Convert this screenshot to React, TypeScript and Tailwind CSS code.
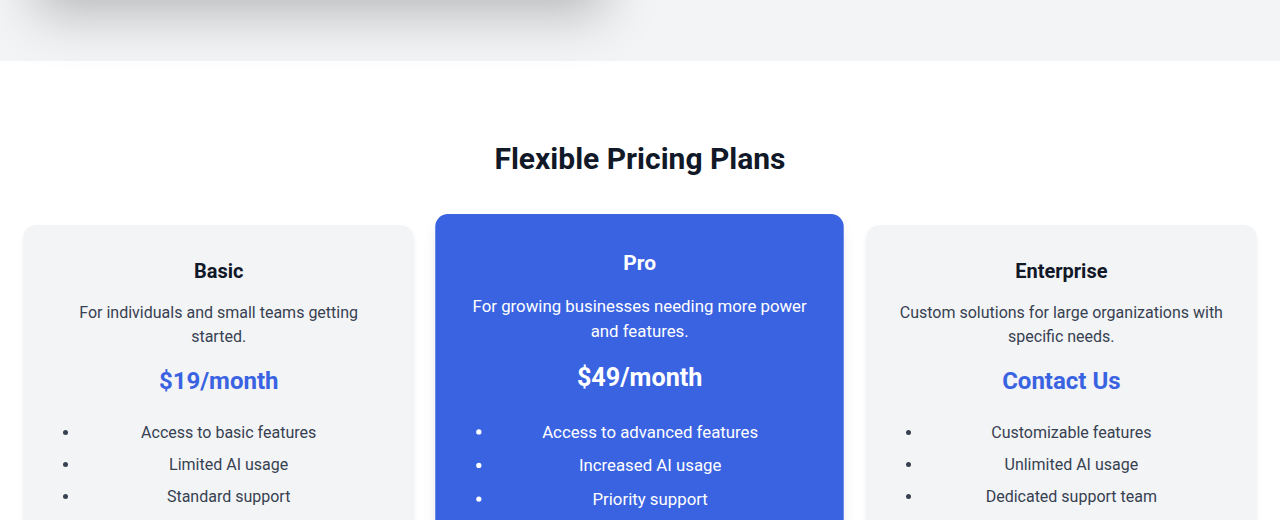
const plans = [
  {
    name: 'Basic',
    desc: 'For individuals and small teams getting started.',
    price: '$19/month',
    features: ['Access to basic features', 'Limited AI usage', 'Standard support'],
    featured: false,
  },
  {
    name: 'Pro',
    desc: 'For growing businesses needing more power and features.',
    price: '$49/month',
    features: ['Access to advanced features', 'Increased AI usage', 'Priority support'],
    featured: true,
  },
  {
    name: 'Enterprise',
    desc: 'Custom solutions for large organizations with specific needs.',
    price: 'Contact Us',
    features: ['Customizable features', 'Unlimited AI usage', 'Dedicated support team'],
    featured: false,
  },
]

const App = () => {
  return (
    <div className="min-h-screen bg-white font-['Roboto',sans-serif] overflow-hidden">
      <section className="bg-[#f3f4f6] px-6 pb-[61px]">
        <div className="grid grid-cols-2 gap-12">
          <div className="h-[300px] -mt-[300px] rounded-xl bg-white shadow-2xl" />
          <div />
        </div>
      </section>

      <section className="px-6 py-20">
        <h2 className="text-center text-3xl font-bold text-[#111827] mb-12">
          Flexible Pricing Plans
        </h2>
        <div className="grid grid-cols-3 gap-8">
          {plans.map((plan) =>
            plan.featured ? (
              <div
                key={plan.name}
                className="h-[440px] scale-105 rounded-xl bg-[#3a63e2] p-8 text-center text-white shadow-lg"
              >
                <h3 className="text-xl font-bold mb-4">{plan.name}</h3>
                <p className="text-base leading-6 mb-4">{plan.desc}</p>
                <div className="text-2xl font-bold mb-6">{plan.price}</div>
                <ul className="list-disc pl-6 pr-1 space-y-2">
                  {plan.features.map((f) => (
                    <li key={f}>{f}</li>
                  ))}
                </ul>
              </div>
            ) : (
              <div
                key={plan.name}
                className="h-[440px] rounded-xl bg-[#f3f4f6] p-8 text-center shadow-md"
              >
                <h3 className="text-xl font-bold text-[#111827] mb-4">{plan.name}</h3>
                <p className="text-base leading-6 text-[#374151] mb-4">{plan.desc}</p>
                <div className="text-2xl font-bold text-[#3a63e2] mb-6">{plan.price}</div>
                <ul className="list-disc pl-6 pr-1 space-y-2 text-[#374151]">
                  {plan.features.map((f) => (
                    <li key={f}>{f}</li>
                  ))}
                </ul>
              </div>
            )
          )}
        </div>
      </section>
    </div>
  )
}

export default App
